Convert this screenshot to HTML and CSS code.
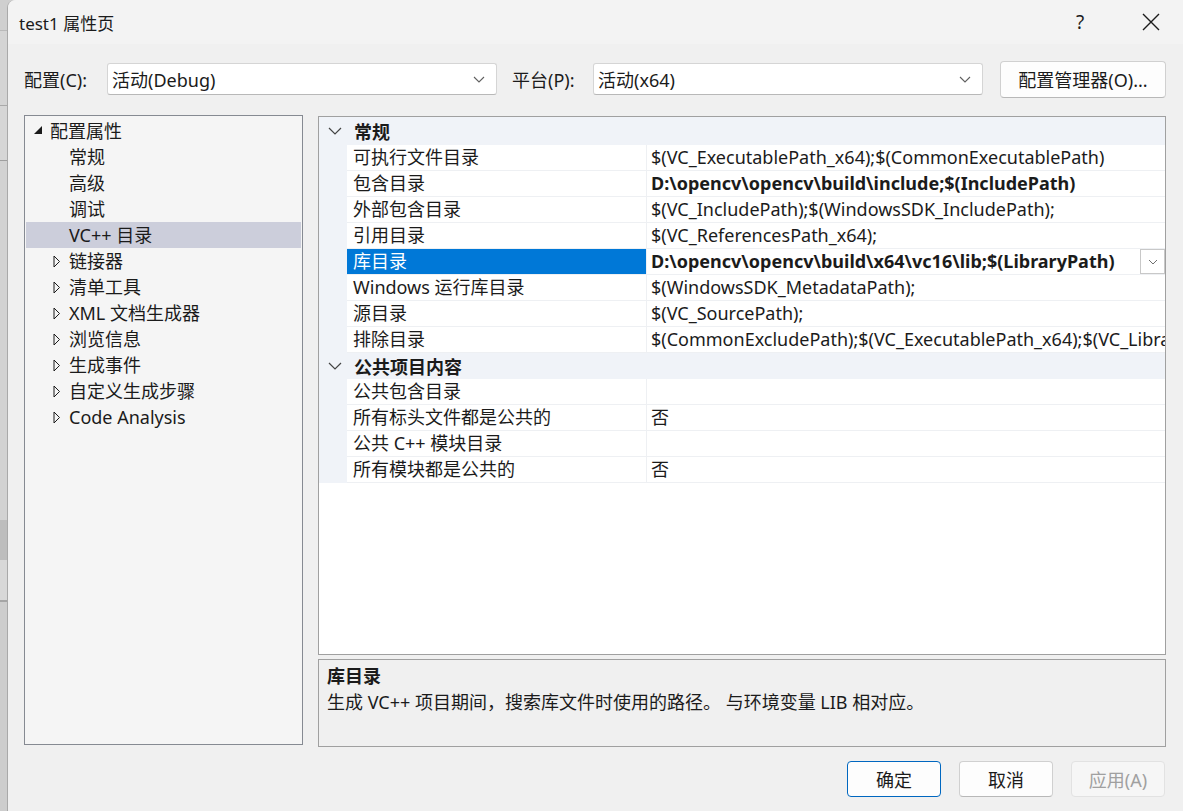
FILE: index.html
```html
<!DOCTYPE html>
<html lang="zh-CN">
<head>
  <meta charset="UTF-8" />
  <title>test1 属性页</title>
  <link rel="stylesheet" href="styles.css">
</head>
<body>
  <div class="desktop">
    <div class="behind"></div>

    <div class="dialog">
      <div class="titlebar">
        <span class="title">test1 属性页</span>
        <div class="title-btns">
          <span class="help">?</span>
          <span class="close">
            <svg width="18" height="18" viewBox="0 0 18 18"><path d="M1 1 L17 17 M17 1 L1 17" stroke="#1b1b1b" stroke-width="1.4" fill="none"/></svg>
          </span>
        </div>
      </div>

      <div class="config-row">
        <span class="lbl">配置(C):</span>
        <div class="combo">
          <span>活动(Debug)</span>
          <svg width="12" height="7" viewBox="0 0 12 7"><path d="M1 1 L6 6 L11 1" stroke="#606060" stroke-width="1.1" fill="none"/></svg>
        </div>
        <span class="lbl lbl-platform">平台(P):</span>
        <div class="combo">
          <span>活动(x64)</span>
          <svg width="12" height="7" viewBox="0 0 12 7"><path d="M1 1 L6 6 L11 1" stroke="#606060" stroke-width="1.1" fill="none"/></svg>
        </div>
        <button class="btn btn-mgr">配置管理器(O)...</button>
      </div>

      <div class="main">
        <div class="tree">
          <div class="node root">
            <span class="twisty"><svg width="10" height="10" viewBox="0 0 10 10"><polygon points="9,1 9,9 1,9" fill="#1b1b1b"/></svg></span>配置属性
          </div>
          <div class="node leaf">常规</div>
          <div class="node leaf">高级</div>
          <div class="node leaf">调试</div>
          <div class="node leaf selected">VC++ 目录</div>
          <div class="node child"><span class="twisty"><svg width="8" height="13" viewBox="0 0 8 13"><polygon points="1,1 6.5,6.5 1,12" fill="none" stroke="#1b1b1b" stroke-width="1"/></svg></span>链接器</div>
          <div class="node child"><span class="twisty"><svg width="8" height="13" viewBox="0 0 8 13"><polygon points="1,1 6.5,6.5 1,12" fill="none" stroke="#1b1b1b" stroke-width="1"/></svg></span>清单工具</div>
          <div class="node child"><span class="twisty"><svg width="8" height="13" viewBox="0 0 8 13"><polygon points="1,1 6.5,6.5 1,12" fill="none" stroke="#1b1b1b" stroke-width="1"/></svg></span>XML 文档生成器</div>
          <div class="node child"><span class="twisty"><svg width="8" height="13" viewBox="0 0 8 13"><polygon points="1,1 6.5,6.5 1,12" fill="none" stroke="#1b1b1b" stroke-width="1"/></svg></span>浏览信息</div>
          <div class="node child"><span class="twisty"><svg width="8" height="13" viewBox="0 0 8 13"><polygon points="1,1 6.5,6.5 1,12" fill="none" stroke="#1b1b1b" stroke-width="1"/></svg></span>生成事件</div>
          <div class="node child"><span class="twisty"><svg width="8" height="13" viewBox="0 0 8 13"><polygon points="1,1 6.5,6.5 1,12" fill="none" stroke="#1b1b1b" stroke-width="1"/></svg></span>自定义生成步骤</div>
          <div class="node child"><span class="twisty"><svg width="8" height="13" viewBox="0 0 8 13"><polygon points="1,1 6.5,6.5 1,12" fill="none" stroke="#1b1b1b" stroke-width="1"/></svg></span>Code Analysis</div>
        </div>

        <div class="right">
          <div class="grid">
            <div class="cat first">
              <span class="cat-chev"><svg width="14" height="8" viewBox="0 0 14 8"><path d="M1 1 L7 7 L13 1" stroke="#444" stroke-width="1.2" fill="none"/></svg></span>
              <span class="cat-name">常规</span>
            </div>
            <div class="row"><span class="gut"></span><span class="name">可执行文件目录</span><span class="val">$(VC_ExecutablePath_x64);$(CommonExecutablePath)</span></div>
            <div class="row"><span class="gut"></span><span class="name">包含目录</span><span class="val bold">D:\opencv\opencv\build\include;$(IncludePath)</span></div>
            <div class="row"><span class="gut"></span><span class="name">外部包含目录</span><span class="val">$(VC_IncludePath);$(WindowsSDK_IncludePath);</span></div>
            <div class="row"><span class="gut"></span><span class="name">引用目录</span><span class="val">$(VC_ReferencesPath_x64);</span></div>
            <div class="row active"><span class="gut"></span><span class="name">库目录</span><span class="val bold">D:\opencv\opencv\build\x64\vc16\lib;$(LibraryPath)
              <span class="drop"><svg width="10" height="6" viewBox="0 0 10 6"><path d="M1 1 L5 5 L9 1" stroke="#707070" stroke-width="1" fill="none"/></svg></span></span></div>
            <div class="row"><span class="gut"></span><span class="name">Windows 运行库目录</span><span class="val">$(WindowsSDK_MetadataPath);</span></div>
            <div class="row"><span class="gut"></span><span class="name">源目录</span><span class="val">$(VC_SourcePath);</span></div>
            <div class="row"><span class="gut"></span><span class="name">排除目录</span><span class="val">$(CommonExcludePath);$(VC_ExecutablePath_x64);$(VC_LibraryPath_x64)</span></div>
            <div class="cat">
              <span class="cat-chev"><svg width="14" height="8" viewBox="0 0 14 8"><path d="M1 1 L7 7 L13 1" stroke="#444" stroke-width="1.2" fill="none"/></svg></span>
              <span class="cat-name">公共项目内容</span>
            </div>
            <div class="row"><span class="gut"></span><span class="name">公共包含目录</span><span class="val"></span></div>
            <div class="row"><span class="gut"></span><span class="name">所有标头文件都是公共的</span><span class="val">否</span></div>
            <div class="row"><span class="gut"></span><span class="name">公共 C++ 模块目录</span><span class="val"></span></div>
            <div class="row"><span class="gut"></span><span class="name">所有模块都是公共的</span><span class="val">否</span></div>
          </div>

          <div class="desc">
            <div class="desc-title">库目录</div>
            <div class="desc-text">生成 VC++ 项目期间，搜索库文件时使用的路径。 与环境变量 LIB 相对应。</div>
          </div>
        </div>
      </div>

      <div class="footer">
        <button class="btn btn-ok">确定</button>
        <button class="btn">取消</button>
        <button class="btn btn-off">应用(A)</button>
      </div>
    </div>
  </div>
</body>
</html>
```

FILE: styles.css
```css
body {
  margin: 0;
  font-family: "Noto Sans", "Noto Sans CJK SC", sans-serif;
  font-size: 18px;
  color: #1b1b1b;
  background: #cfcfcf;
}

.desktop {
  display: flex;
  width: 1183px;
  height: 811px;
  overflow: hidden;
}

.behind {
  width: 7px;
  flex: none;
  background:
    linear-gradient(#cfcfcf 0 30px, #b9b9b9 30px 31px, #d4d4d4 31px 105px, #a9a9a9 105px 106px,
      #d6d6d6 106px 160px, #9f9f9f 160px 161px, #d2d2d2 161px 520px, #bdbdbd 520px 560px,
      #d8d8d8 560px 600px, #a5a5a5 600px 602px, #cdcdcd 602px);
}

.dialog {
  flex: 1;
  display: flex;
  flex-direction: column;
  background: #f0f0f0;
  border-left: 1px solid #a9a9a9;
  border-top-left-radius: 8px;
}

/* title bar */
.titlebar {
  height: 44px;
  flex: none;
  display: flex;
  align-items: center;
  justify-content: space-between;
  padding-left: 11px;
  background: #f3f3f3;
  border-top-left-radius: 8px;
}

.title {
  font-size: 17px;
}

.title-btns {
  display: flex;
  align-items: center;
  height: 100%;
}

.help {
  width: 46px;
  text-align: center;
  font-size: 19px;
  margin-right: 18px;
}

.close {
  width: 60px;
  display: flex;
  justify-content: center;
  padding-right: 2px;
}

/* configuration row */
.config-row {
  height: 70px;
  flex: none;
  display: flex;
  align-items: center;
  padding-left: 16px;
}

.lbl {
  width: 83px;
}

.lbl-platform {
  margin-left: 15px;
  width: 81px;
}

.combo {
  height: 30px;
  border: 1px solid #d5d5d5;
  border-bottom-color: #b8b8b8;
  border-radius: 3px;
  background: #fff;
  display: flex;
  align-items: center;
  justify-content: space-between;
  padding: 0 11px 0 4px;
  box-sizing: content-box;
  width: 373px;
}

.btn {
  font-family: inherit;
  font-size: 18px;
  color: #1b1b1b;
  background: #fdfdfd;
  border: 1px solid #d0d0d0;
  border-bottom-color: #b8b8b8;
  border-radius: 4px;
  height: 36px;
  width: 94px;
  padding: 0;
}

.btn-mgr {
  margin-left: 17px;
  width: 166px;
  height: 37px;
}

/* main area */
.main {
  display: flex;
  flex: none;
  gap: 15px;
  padding: 1px 17px 0 16px;
  height: 632px;
}

.tree {
  width: 275px;
  height: 626px;
  border: 1px solid #868a92;
  background: #f5f5f5;
  padding: 2px 1px 0 1px;
}

.node {
  height: 26px;
  line-height: 26px;
  display: flex;
  align-items: center;
  white-space: nowrap;
}

.node .twisty {
  width: 17px;
  display: flex;
  align-items: center;
}

.node.root {
  padding-left: 7px;
}

.node.root .twisty svg {
  margin-top: -3px;
}

.node.leaf {
  padding-left: 43px;
}

.node.child {
  padding-left: 27px;
}

.node.child .twisty {
  width: 16px;
}

.node.selected {
  background: #cccedb;
}

.right {
  flex: 1;
  display: flex;
  flex-direction: column;
  gap: 4px;
  padding-top: 1px;
}

.grid {
  height: 537px;
  flex: none;
  border: 1px solid #a0a0a0;
  background: #fff;
  overflow: hidden;
}

.cat {
  height: 26px;
  background: #f0f3f8;
  display: flex;
  align-items: center;
  font-weight: bold;
}

.cat.first {
  height: 28px;
}

.cat-chev {
  width: 35px;
  padding-left: 9px;
  box-sizing: border-box;
  display: flex;
}

.row {
  display: grid;
  grid-template-columns: 28px 300px 1fr;
  height: 26px;
}

.row .gut {
  background: #f0f3f8;
}

.row .name,
.row .val {
  line-height: 25px;
  border-bottom: 1px solid #eef0f3;
  white-space: nowrap;
  overflow: hidden;
}

.row .name {
  padding-left: 6px;
  border-right: 1px solid #eef0f3;
}

.row .val {
  padding-left: 4px;
  position: relative;
}

.val.bold {
  font-weight: bold;
}

.row.active .name {
  background: #0078d7;
  color: #fff;
}

.drop {
  position: absolute;
  right: 0;
  top: 0;
  width: 23px;
  height: 23px;
  border: 1px solid #c8c8c8;
  background: #fff;
  display: flex;
  align-items: center;
  justify-content: center;
}

.desc {
  height: 83px;
  flex: none;
  border: 1px solid #a0a0a0;
  background: #f0f0f0;
  padding: 3px 8px 0;
}

.desc-title {
  font-weight: bold;
  line-height: 26px;
}

.desc-text {
  line-height: 26px;
}

/* footer buttons */
.footer {
  display: flex;
  justify-content: flex-end;
  gap: 18px;
  padding: 14px 18px 0 0;
}

.btn-ok {
  border: 1px solid #0067c0;
}

.btn-off {
  color: #a0a0a0;
  background: #f6f6f6;
  border-color: #e2e2e2;
}
```
